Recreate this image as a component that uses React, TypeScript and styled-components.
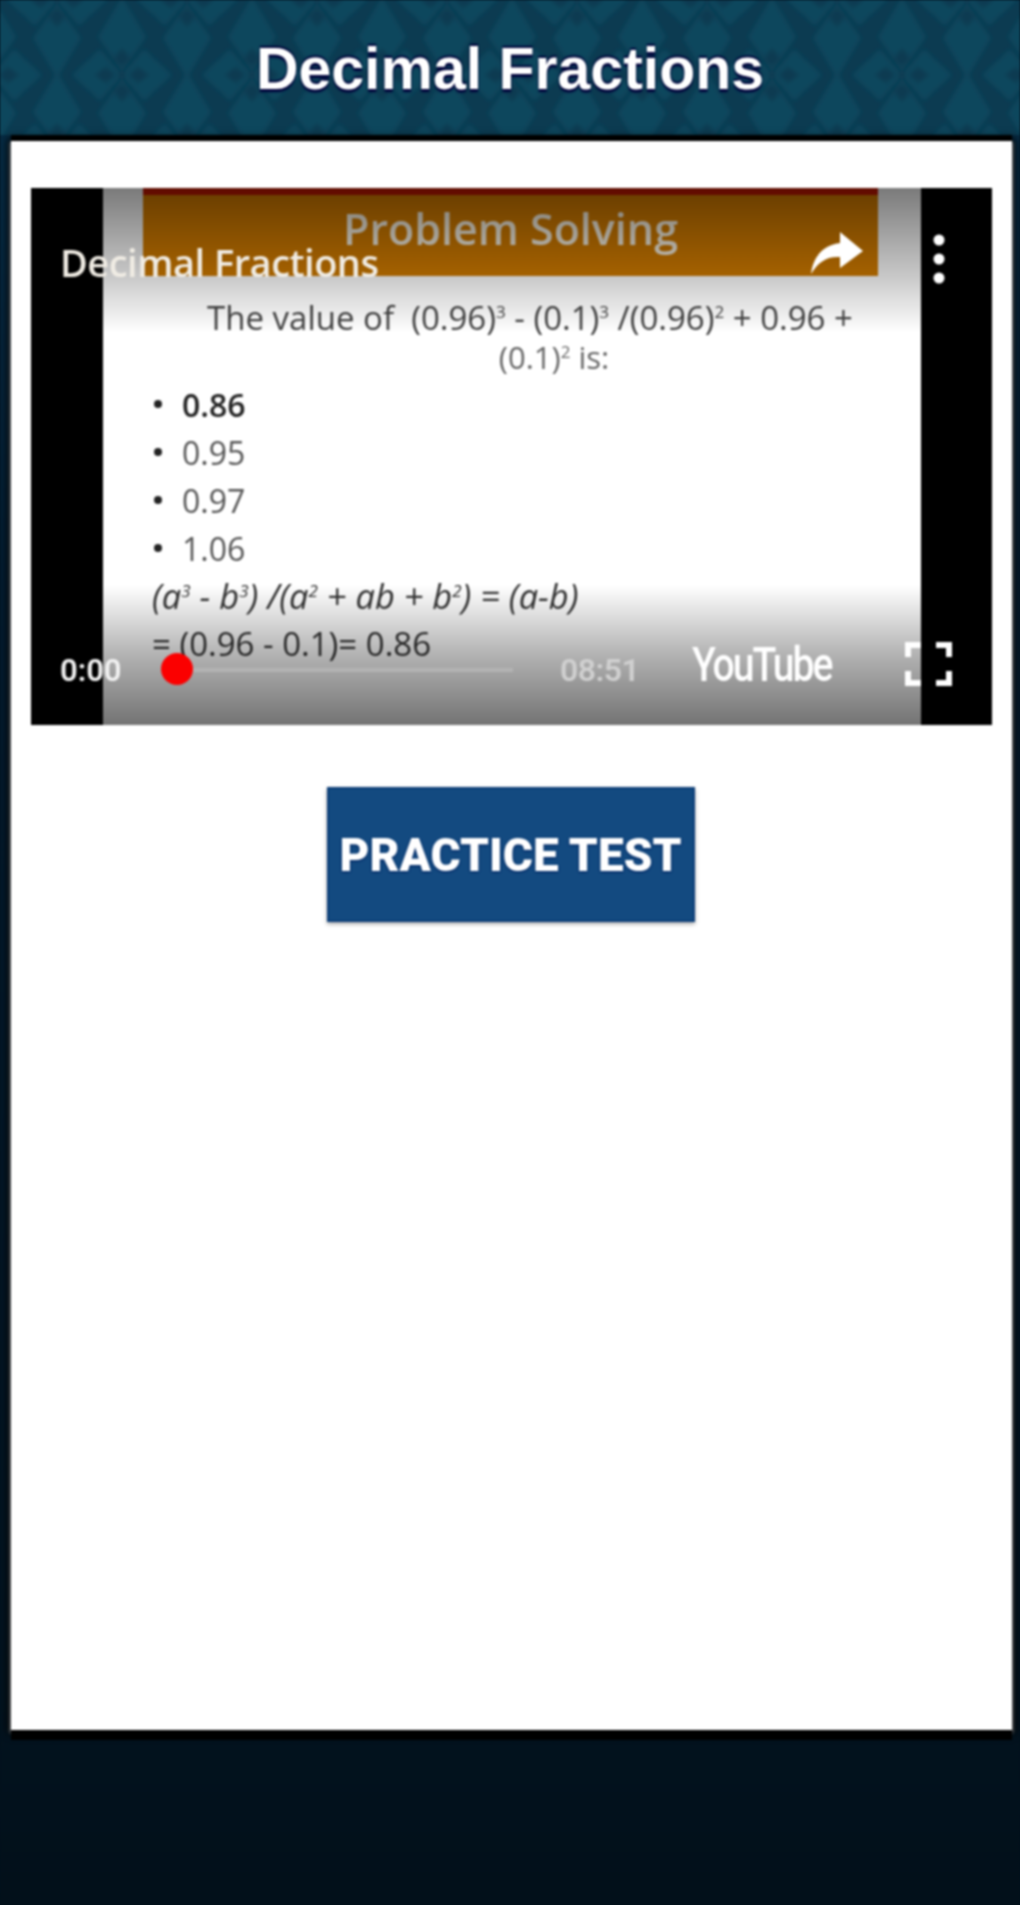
import React from "react";
import styled, { createGlobalStyle } from "styled-components";

const lobe = (x: number, y: number) => `
<path d="M${x} ${y - 78} L${x + 24} ${y - 38} L${x} ${y - 4} L${x - 24} ${y - 38}Z"/>
<path d="M${x} ${y + 78} L${x + 24} ${y + 38} L${x} ${y + 4} L${x - 24} ${y + 38}Z"/>
<path d="M${x - 50} ${y} L${x - 22} ${y - 26} L${x} ${y} L${x - 22} ${y + 26}Z"/>
<path d="M${x + 50} ${y} L${x + 22} ${y - 26} L${x} ${y} L${x + 22} ${y + 26}Z"/>`;
const spots = (x: number, y: number) => `
<path d="M${x} ${y - 27} L${x + 8} ${y - 17} L${x} ${y - 8} L${x - 8} ${y - 17}Z"/>
<path d="M${x} ${y + 27} L${x + 8} ${y + 17} L${x} ${y + 8} L${x - 8} ${y + 17}Z"/>
<path d="M${x - 27} ${y} L${x - 16} ${y - 8} L${x - 7} ${y} L${x - 16} ${y + 8}Z"/>
<path d="M${x + 27} ${y} L${x + 16} ${y - 8} L${x + 7} ${y} L${x + 16} ${y + 8}Z"/>
<path d="M${x} ${y - 4} L${x + 4} ${y} L${x} ${y + 4} L${x - 4} ${y}Z"/>`;
const places: [number, number][] = [
  [57, 0],
  [57, 150],
  [122, 75],
  [-8, 75],
];
const tile = encodeURIComponent(
  `<svg xmlns="http://www.w3.org/2000/svg" width="130" height="150" viewBox="0 0 130 150"><filter id="b" x="-10%" y="-10%" width="120%" height="120%"><feGaussianBlur stdDeviation="2"/></filter><g filter="url(#b)"><g fill="#0e475d">${places
    .map(([x, y]) => lobe(x, y))
    .join("")}</g><g fill="#0c3b51">${places.map(([x, y]) => spots(x, y)).join("")}</g></g></svg>`,
);

const Global = createGlobalStyle`
  html, body { margin: 0; padding: 0; background: #02101b; }
  body { width: 1020px; height: 1905px; overflow: hidden; font-family: "Liberation Sans", sans-serif; }
  #root { width: 1020px; height: 1905px; }
`;

const Page = styled.div`
  display: flex;
  flex-direction: column;
  width: 1020px;
  height: 1905px;
  overflow: hidden;
  background: linear-gradient(#07304a 0, #041c30 600px, #03131f 1700px, #02101a 100%);
  filter: blur(1.3px);
`;

const Header = styled.header`
  display: flex;
  align-items: center;
  justify-content: center;
  height: 135px;
  flex: none;
  background-color: #0c3b51;
  background-image: url("data:image/svg+xml,${tile}");
`;

const Title = styled.h1`
  margin: 4px 0 0;
  color: #fff;
  font: 700 59px/1 "Liberation Sans", sans-serif;
  text-shadow: 0 3px 2px #00003a, 0 -2px 2px #00003a;
`;

const Card = styled.main`
  flex: none;
  display: flex;
  flex-direction: column;
  align-items: center;
  height: 1589px;
  margin: 6px 8px 0 11px;
  padding: 47px 20px 0;
  box-sizing: border-box;
  background: #fff;
  box-shadow: 0 -6px 0 #000, 0 10px 0 #000, 0 2px 3px 1px #777, 0 0 8px 3px #000;
`;

const Video = styled.section`
  position: relative;
  display: flex;
  width: 961px;
  height: 537px;
  flex: none;
  overflow: hidden;
  background: #000;
  font-family: "Open Sans", "Liberation Sans", sans-serif;
`;

const Slide = styled.div`
  display: flex;
  flex-direction: column;
  width: 818px;
  margin-left: 72px;
  background: #fff;
`;

const Banner = styled.div`
  display: flex;
  align-items: center;
  justify-content: center;
  height: 88px;
  margin: 0 43px 0 40px;
  box-sizing: border-box;
  padding-bottom: 15px;
  border-top: 7px solid #c81800;
  background: linear-gradient(#d87f00, #d27c00);
  color: #fff8e8;
  font-size: 43px;
  font-weight: 600;
`;

const Question = styled.p`
  margin: 22px 60px 0 96px;
  color: #444;
  font: 33px/39px "Open Sans", sans-serif;
  text-align: center;
  white-space: nowrap;
`;

const QuestionEnd = styled.span`
  display: inline-block;
  margin-left: 48px;
  color: #666;
  font-size: 31px;
`;

const Sup = styled.sup`
  font-size: 17px;
  line-height: 0;
`;

const Options = styled.ul`
  display: flex;
  flex-direction: column;
  margin: 3px 0 0 51px;
  padding: 0;
  list-style: none;
`;

const Option = styled.li<{ $strong?: boolean }>`
  display: flex;
  align-items: center;
  gap: 20px;
  height: 48px;
  color: ${(p) => (p.$strong ? "#222" : "#555")};
  font-size: 32px;
  font-weight: ${(p) => (p.$strong ? 600 : 400)};
  &::before {
    content: "";
    width: 8px;
    height: 8px;
    border-radius: 50%;
    background: #222;
  }
`;

const Formula = styled.div<{ $italic?: boolean }>`
  margin-left: 49px;
  height: 48px;
  color: #333;
  font-size: ${(p) => (p.$italic ? 34.4 : 33)}px;
  line-height: 48px;
  font-style: ${(p) => (p.$italic ? "italic" : "normal")};
  white-space: nowrap;
`;

const TopShade = styled.div`
  position: absolute;
  inset: 0 71px auto 72px;
  height: 145px;
  background: linear-gradient(rgba(0, 0, 0, 0.52), rgba(0, 0, 0, 0.22) 60%, rgba(0, 0, 0, 0));
`;

const BottomShade = styled.div`
  position: absolute;
  inset: auto 71px 0 72px;
  height: 140px;
  background: linear-gradient(rgba(0, 0, 0, 0), rgba(0, 0, 0, 0.3) 50%, rgba(0, 0, 0, 0.55));
`;

const TopControls = styled.div`
  position: absolute;
  top: 44px;
  left: 29px;
  right: 44px;
  display: flex;
  align-items: flex-start;
  justify-content: space-between;
`;

const VideoTitle = styled.span`
  margin-top: 8px;
  font: 600 38px/1.2 "Open Sans", sans-serif;
  letter-spacing: -0.5px;
  color: #f0ece4;
`;

const TopIcons = styled.div`
  display: flex;
  align-items: flex-start;
  gap: 67px;
`;

const BottomControls = styled.div`
  position: absolute;
  left: 29px;
  right: 40px;
  bottom: 36px;
  display: flex;
  align-items: center;
  height: 50px;
`;

const Time = styled.span<{ $dim?: boolean }>`
  width: 62px;
  margin-top: 12px;
  font: 600 ${(p) => (p.$dim ? 32 : 31)}px/1 "Roboto", sans-serif;
  color: ${(p) => (p.$dim ? "#d0d0d0" : "#f2f2f2")};
  letter-spacing: ${(p) => (p.$dim ? "-0.5px" : "0")};
  white-space: nowrap;
`;

const Track = styled.div`
  position: relative;
  width: 352px;
  height: 4px;
  margin: 12px 47px 0 39px;
  background: rgba(205, 205, 205, 0.35);
`;

const Thumb = styled.span`
  position: absolute;
  left: 0;
  top: -15px;
  width: 32px;
  height: 32px;
  border-radius: 50%;
  background: #fb0000;
`;

const Logo = styled.span`
  margin-left: 70px;
  font: 500 49px/1 "Roboto", sans-serif;
  letter-spacing: -2.6px;
  color: #fff;
  transform: scaleX(0.8);
  transform-origin: left center;
`;

const FullIcon = styled.svg`
  margin-left: auto;
  flex: none;
`;

const PracticeButton = styled.button`
  display: flex;
  align-items: center;
  justify-content: center;
  width: 368px;
  height: 135px;
  margin: 62px 2px 0 0;
  padding: 0;
  flex: none;
  border: 2px solid #0b3d78;
  background: #134a80;
  color: #fff;
  font: 900 46px/1 "Roboto", sans-serif;
  white-space: nowrap;
  text-shadow: 0 1px 3px #00205f;
  box-shadow: 0 2px 4px rgba(0, 0, 0, 0.35);
`;

export default function App() {
  return (
    <Page>
      <Global />
      <Header>
        <Title>Decimal Fractions</Title>
      </Header>
      <Card>
        <Video>
          <Slide>
            <Banner>Problem Solving</Banner>
            <Question>
              The value of&nbsp; (0.96)<Sup>3</Sup> - (0.1)<Sup>3</Sup> /(0.96)<Sup>2</Sup> + 0.96 +
              <br />
              <QuestionEnd>
                (0.1)<Sup>2</Sup> is:
              </QuestionEnd>
            </Question>
            <Options>
              <Option $strong>0.86</Option>
              <Option>0.95</Option>
              <Option>0.97</Option>
              <Option>1.06</Option>
            </Options>
            <Formula $italic>
              (a<Sup>3</Sup> - b<Sup>3</Sup>) /(a<Sup>2</Sup> + ab + b<Sup>2</Sup>) = (a-b)
            </Formula>
            <Formula>= (0.96 - 0.1)= 0.86</Formula>
          </Slide>
          <TopShade />
          <BottomShade />
          <TopControls>
            <VideoTitle>Decimal Fractions</VideoTitle>
            <TopIcons>
              <svg width="54" height="42" viewBox="0 0 54 42" aria-hidden="true">
                <path d="M31 0 L54 19 L31 36 L31 25 C18 24 9 30 2 42 C4 25 14 13 31 11 Z" fill="#fff" />
              </svg>
              <svg width="18" height="54" viewBox="0 0 18 54" aria-hidden="true">
                <circle cx="9" cy="8" r="5.5" fill="#fff" />
                <circle cx="9" cy="27" r="5.5" fill="#fff" />
                <circle cx="9" cy="46" r="5.5" fill="#fff" />
              </svg>
            </TopIcons>
          </TopControls>
          <BottomControls>
            <Time>0:00</Time>
            <Track>
              <Thumb />
            </Track>
            <Time $dim>08:51</Time>
            <Logo>YouTube</Logo>
            <FullIcon width="47" height="44" viewBox="0 0 47 44" aria-hidden="true">
              <path
                d="M3 15 V3 H16 M31 3 H44 V15 M44 29 V41 H31 M16 41 H3 V29"
                fill="none"
                stroke="#fff"
                strokeWidth="6"
              />
            </FullIcon>
          </BottomControls>
        </Video>
        <PracticeButton>PRACTICE TEST</PracticeButton>
      </Card>
    </Page>
  );
}
